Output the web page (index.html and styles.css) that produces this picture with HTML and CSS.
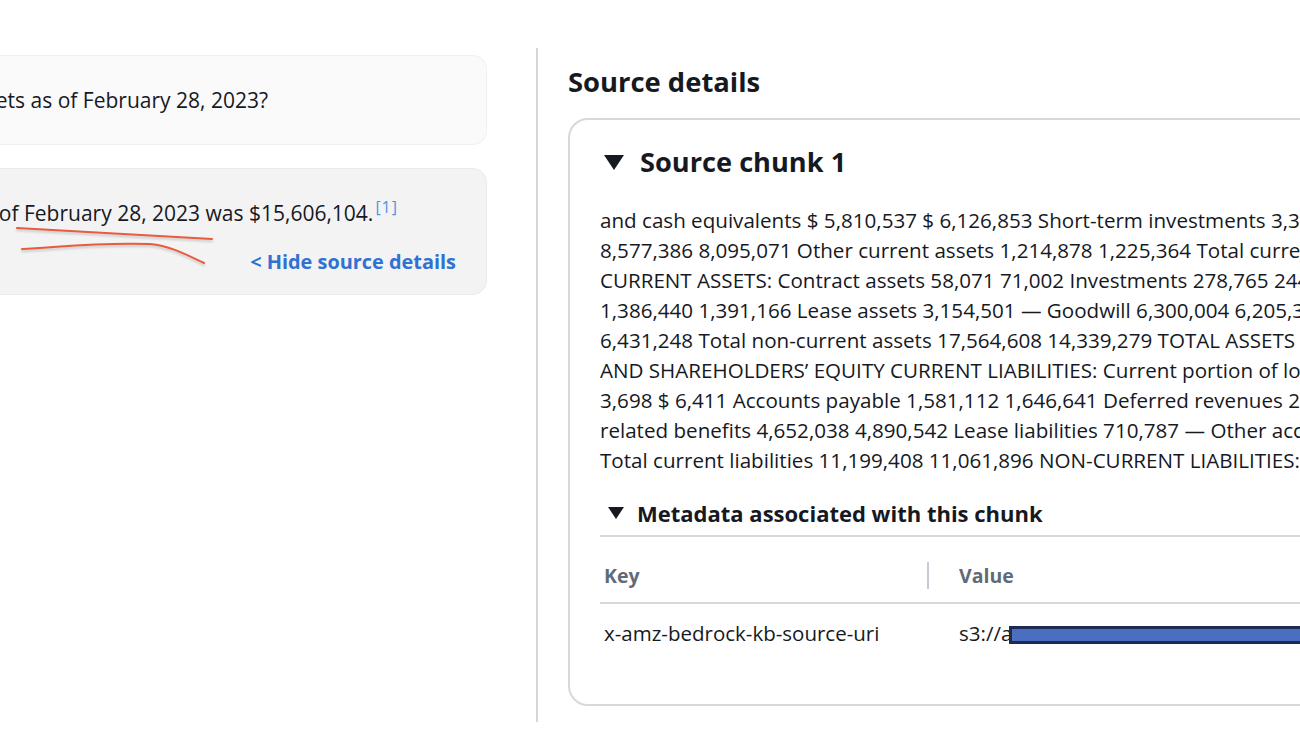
FILE: index.html
```html
<!DOCTYPE html>
<html lang="en">
<head>
<meta charset="utf-8">
<title>Source details</title>
<link rel="stylesheet" href="styles.css">
</head>
<body>
<div class="page">
  <section class="chat">
    <div class="bubble bubble-question">
      <div class="line line-q"><span>What were the total assets as of February 28, 2023?</span></div>
    </div>
    <div class="bubble bubble-answer">
      <div class="line line-a"><span>The total assets as of February 28, 2023 was $15,606,104.<sup class="cite">[1]</sup></span></div>
      <div class="link-row"><a class="hide-link" href="#">&lt; Hide source details</a></div>
    </div>
    <svg class="scribble" width="240" height="60" viewBox="0 0 240 60" aria-hidden="true">
      <path d="M17 8 C 60 11, 120 14, 212 19" />
      <path d="M22 29 C 60 27, 100 22, 150 24 C 170 26, 185 34, 204 43" />
    </svg>
  </section>
  <div class="divider"></div>
  <section class="details">
    <h2 class="details-title">Source details</h2>
    <div class="card">
      <div class="chunk-head"><span class="tri tri-lg"></span>Source chunk 1</div>
      <p class="chunk-text">and cash equivalents $ 5,810,537 $ 6,126,853 Short-term investments 3,318 4,773 Receivables and contract assets<br>8,577,386 8,095,071 Other current assets 1,214,878 1,225,364 Total current assets 15,606,104 15,451,684 NON-<br>CURRENT ASSETS: Contract assets 58,071 71,002 Investments 278,765 244,539 Property and equipment, net<br>1,386,440 1,391,166 Lease assets 3,154,501 — Goodwill 6,300,004 6,205,364 Deferred contract costs 702,569<br>6,431,248 Total non-current assets 17,564,608 14,339,279 TOTAL ASSETS $ 33,170,712 $ 29,790,963 LIABILITIES<br>AND SHAREHOLDERS’ EQUITY CURRENT LIABILITIES: Current portion of long-term debt and bank borrowings $<br>3,698 $ 6,411 Accounts payable 1,581,112 1,646,641 Deferred revenues 2,154,383 2,154,465 Accrued payroll and<br>related benefits 4,652,038 4,890,542 Lease liabilities 710,787 — Other accrued liabilities 1,097,390 1,103,337<br>Total current liabilities 11,199,408 11,061,896 NON-CURRENT LIABILITIES: Long-term debt 47,519 48,331</p>
      <div class="meta-head"><span class="tri tri-sm"></span>Metadata associated with this chunk</div>
      <div class="meta-table">
        <div class="cell th th-key">Key</div>
        <div class="cell th th-value">Value</div>
        <div class="cell td td-key">x-amz-bedrock-kb-source-uri</div>
        <div class="cell td td-value">s3://a<span class="redact"></span></div>
      </div>
    </div>
  </section>
</div>
</body>
</html>
```
FILE: styles.css
```css
* { box-sizing: border-box; }
html, body {
  margin: 0;
  padding: 0;
  background: #ffffff;
  overflow: hidden;
}
body {
  width: 1300px;
  height: 731px;
  font-family: "Open Sans", "Noto Sans", "Liberation Sans", sans-serif;
  color: #16191f;
}
.page {
  position: relative;
  display: flex;
  align-items: flex-start;
  width: 1300px;
  height: 731px;
}

/* ---- left chat column ---- */
.chat {
  position: relative;
  width: 487px;
  flex: none;
  margin-right: 49px;
  padding-top: 55px;
}
.bubble {
  margin-left: -300px;
  border-radius: 14px;
}
.bubble-question {
  height: 90px;
  background: #fafafa;
  border: 1px solid #f0f0f0;
  padding-top: 32px;
}
.bubble-answer {
  margin-top: 23px;
  height: 127px;
  background: #f3f3f3;
  border: 1px solid #ebebeb;
  padding-top: 32px;
  padding-right: 30px;
}
.line {
  display: flex;
  justify-content: flex-end;
  white-space: nowrap;
  font-size: 21px;
  line-height: 24px;
}
.line-q { width: 567px; }
.line-a { width: 697px; }
.cite {
  font-size: 16px;
  letter-spacing: 1px;
  color: #4d93e0;
  vertical-align: 8px;
  line-height: 0;
  margin-left: 2px;
}
.link-row {
  display: flex;
  justify-content: flex-end;
  margin-top: 25px;
}
.hide-link {
  font-size: 19.9px;
  line-height: 24px;
  font-weight: 700;
  color: #2f72d2;
  text-decoration: none;
}
.scribble {
  position: absolute;
  left: 0;
  top: 220px;
  fill: none;
  stroke: #ea5a3c;
  stroke-width: 2px;
  stroke-linecap: round;
  filter: drop-shadow(0 2px 1px rgba(0,0,0,0.18));
}

.divider {
  flex: none;
  width: 2px;
  height: 674px;
  margin-top: 48px;
  background: #d3d7dc;
}

/* ---- right details column ---- */
.details {
  flex: none;
  margin-left: 30px;
  padding-top: 65px;
}
.details-title {
  margin: 0 0 19px 0;
  font-size: 27.4px;
  line-height: 34px;
  font-weight: 700;
}
.card {
  width: 820px;
  height: 588px;
  border: 2px solid #d5d9de;
  border-radius: 20px;
  padding: 25px 0 0 30px;
}
.chunk-head {
  display: flex;
  align-items: center;
  font-size: 27.2px;
  line-height: 34px;
  font-weight: 700;
  margin-left: 4px;
}
.tri {
  display: inline-block;
  width: 0;
  height: 0;
  border-left-style: solid;
  border-right-style: solid;
  border-left-color: transparent;
  border-right-color: transparent;
  border-top-style: solid;
  border-top-color: #16191f;
}
.tri-lg {
  border-left-width: 10px;
  border-right-width: 10px;
  border-top-width: 15px;
  margin-right: 16px;
}
.tri-sm {
  border-left-width: 8px;
  border-right-width: 8px;
  border-top-width: 12px;
  margin-right: 13px;
}
.chunk-text {
  margin: 26px 0 0 0;
  white-space: nowrap;
  font-size: 20.6px;
  line-height: 30px;
}
.meta-head {
  display: flex;
  align-items: center;
  margin: 24px 0 0 0;
  padding-left: 8px;
  padding-bottom: 8px;
  font-size: 22px;
  line-height: 28px;
  font-weight: 700;
  border-bottom: 2px solid #d5d9de;
}
.meta-table {
  display: grid;
  grid-template-columns: 329px 1fr;
}
.cell {
  font-size: 20.5px;
  line-height: 24px;
  white-space: nowrap;
}
.th {
  padding-top: 27px;
  padding-bottom: 14px;
  border-bottom: 2px solid #d5d9de;
  font-weight: 700;
  font-size: 19.5px;
  color: #5f6b7a;
}
.th-key {
  padding-left: 4px;
  position: relative;
}
.th-key::after {
  content: "";
  position: absolute;
  right: 0;
  top: 25px;
  width: 2px;
  height: 27px;
  background: #c6cbd1;
}
.th-value { padding-left: 30px; }
.td { padding-top: 17px; }
.td-key { padding-left: 4px; }
.td-value { padding-left: 30px; }
.redact {
  display: inline-block;
  width: 300px;
  height: 18px;
  margin-left: -3px;
  vertical-align: -3px;
  background: #4b6ec0;
  border: 3px solid #1d2b50;
}
```
